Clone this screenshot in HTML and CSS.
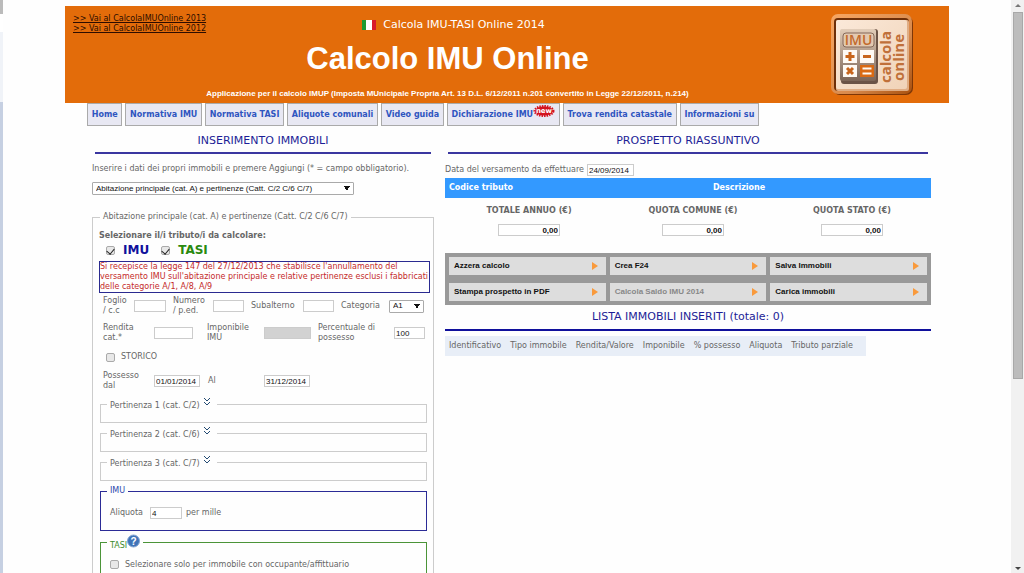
FILE: index.html
```html
<!DOCTYPE html>
<html lang="it">
<head>
<meta charset="utf-8">
<title>Calcolo IMU Online</title>
<link rel="stylesheet" href="styles.css">
</head>
<body>
<div class="window">
  <div class="edge"><div class="edge-top"></div><div class="edge-gap"></div><div class="edge-light"></div><div class="edge-blue"></div></div>
  <main class="view">
    <div class="page">
      <header class="banner">
        <div class="years">
          <a href="#">&gt;&gt; Vai al CalcolaIMUOnline 2013</a>
          <a href="#">&gt;&gt; Vai al CalcolaIMUOnline 2012</a>
        </div>
        <div class="titles">
          <div class="tagline">
            <svg width="14" height="10" viewBox="0 0 14 10"><path fill="#1c9a32" d="M0 0h4v10H0z"/><path fill="#fff" d="M4 0h6v10H4z"/><path fill="#d8192c" d="M10 0h4v10h-4z"/></svg>
            <span>Calcola IMU-TASI Online 2014</span>
          </div>
          <h1>Calcolo IMU Online</h1>
          <p class="law">Applicazione per il calcolo IMUP (Imposta MUnicipale Propria Art. 13 D.L. 6/12/2011 n.201 convertito in Legge 22/12/2011, n.214)</p>
        </div>
        <svg class="logo" width="84" height="84" viewBox="0 0 84 84">
          <defs>
            <linearGradient id="rim" x1="0" y1="0" x2="1" y2="1"><stop offset="0" stop-color="#f7a662"/><stop offset=".6" stop-color="#d98a4c"/><stop offset="1" stop-color="#a9510f"/></linearGradient>
            <linearGradient id="plate" x1="0" y1="0" x2="1" y2="1"><stop offset="0" stop-color="#fbe9d9"/><stop offset="1" stop-color="#f0d3b8"/></linearGradient>
            <linearGradient id="calc" x1="0" y1="0" x2="0" y2="1"><stop offset="0" stop-color="#e2cdb9"/><stop offset="1" stop-color="#7c6557"/></linearGradient>
          </defs>
          <rect x="2" y="2" width="80" height="79" rx="7" fill="#7e3606"/>
          <rect x="0" y="0" width="81" height="80" rx="7" fill="url(#rim)"/>
          <rect x="3" y="4" width="75" height="73" rx="4" fill="#6e2f08"/>
          <rect x="5" y="6" width="73" height="71" rx="2" fill="#e0ad84"/>
          <rect x="5" y="6" width="71" height="69" rx="2" fill="url(#plate)"/>
          <rect x="10" y="15" width="37" height="55" rx="3" fill="#6b5346"/>
          <rect x="9" y="15" width="36" height="52" rx="2" fill="url(#calc)"/>
          <rect x="12" y="19" width="31" height="14" rx="3" fill="#e3c9b0" stroke="#84695a" stroke-width="1"/>
          <text x="27.500" y="31" class="logo-imu" text-anchor="middle">IMU</text>
          <path fill="#fffaf4" d="M12 36h14v13H12zM29 36h14v13H29zM12 51h14v12H12z"/>
          <path fill="#d96a14" d="M29 51h14v12H29z"/>
          <path stroke="#c8651c" stroke-width="3" d="M14.500 42.500h9M19 38v9M32 42.500h8M16 54l6 6M22 54l-6 6"/>
          <path fill="none" stroke="#fffaf4" stroke-width="2" d="M31.500 54.500h9M31.500 59.500h9"/>
          <g class="logo-word"><text transform="translate(60 69) rotate(-90)">calcola</text><text transform="translate(73 67) rotate(-90)">online</text></g>
        </svg>
      </header>

      <nav class="menu">
        <a href="#">Home</a><a href="#">Normativa IMU</a><a href="#">Normativa TASI</a><a href="#">Aliquote comunali</a><a href="#">Video guida</a>
        <a href="#" class="with-badge">Dichiarazione IMU<svg width="22" height="12" viewBox="0 0 22 12"><ellipse cx="11" cy="6" rx="9" ry="4.500" fill="#d3121f"/><ellipse cx="11" cy="6" rx="9.500" ry="5" fill="none" stroke="#d3121f" stroke-width="2" stroke-dasharray="1.500 1"/><text x="11" y="8" text-anchor="middle">new</text></svg></a>
        <a href="#">Trova rendita catastale</a><a href="#">Informazioni su</a>
      </nav>

      <div class="columns">
        <section class="entry">
          <h2>INSERIMENTO IMMOBILI</h2>
          <p class="intro">Inserire i dati dei propri immobili e premere Aggiungi (* = campo obbligatorio).</p>
          <select class="kind" aria-label="Tipo immobile"><option>Abitazione principale (cat. A) e pertinenze (Catt. C/2 C/6 C/7)</option></select>

          <fieldset class="property">
            <legend>Abitazione principale (cat. A) e pertinenze (Catt. C/2 C/6 C/7)</legend>
            <p class="pick">Selezionare il/i tributo/i da calcolare:</p>
            <div class="taxes">
              <label class="imu"><input type="checkbox" checked>IMU</label>
              <label class="tasi"><input type="checkbox" checked>TASI</label>
            </div>
            <p class="notice">Si recepisce la legge 147 del 27/12/2013 che stabilisce l'annullamento del<br>versamento IMU sull'abitazione principale e relative pertinenze esclusi i fabbricati<br>delle categorie A/1, A/8, A/9</p>
            <div class="row cadastre">
              <label for="foglio">Foglio<br>/ c.c</label><input type="text" id="foglio">
              <label for="numero">Numero<br>/ p.ed.</label><input type="text" id="numero">
              <label for="sub">Subalterno</label><input type="text" id="sub">
              <label for="cat">Categoria</label><select id="cat"><option>A1</option></select>
            </div>
            <div class="row income">
              <label for="rendita">Rendita<br>cat.*</label><input type="text" id="rendita">
              <label for="imponibile">Imponibile<br>IMU</label><input type="text" id="imponibile" disabled>
              <label for="perc">Percentuale di<br>possesso</label><input type="text" id="perc" value="100">
            </div>
            <label class="historic"><input type="checkbox">STORICO</label>
            <div class="row period">
              <label for="dal">Possesso<br>dal</label><input type="text" id="dal" value="01/01/2014">
              <label for="al">Al</label><input type="text" id="al" value="31/12/2014">
            </div>
            <fieldset class="annex"><legend>Pertinenza 1 (cat. C/2) <svg width="6" height="8" viewBox="0 0 6 8"><path d="M0 0l3 3 3-3M0 4l3 3 3-3"/></svg></legend></fieldset>
            <fieldset class="annex"><legend>Pertinenza 2 (cat. C/6) <svg width="6" height="8" viewBox="0 0 6 8"><path d="M0 0l3 3 3-3M0 4l3 3 3-3"/></svg></legend></fieldset>
            <fieldset class="annex"><legend>Pertinenza 3 (cat. C/7) <svg width="6" height="8" viewBox="0 0 6 8"><path d="M0 0l3 3 3-3M0 4l3 3 3-3"/></svg></legend></fieldset>
            <fieldset class="rate imu-box">
              <legend>IMU</legend>
              <label for="aliquota">Aliquota</label><input type="text" id="aliquota" value="4"><span>per mille</span>
            </fieldset>
            <fieldset class="rate tasi-box">
              <legend>TASI<svg width="13" height="14" viewBox="0 0 13 14"><circle cx="6.500" cy="7" r="6" fill="#3f74b8" stroke="#86a6d2"/><text x="6.500" y="11" text-anchor="middle">?</text></svg></legend>
              <label class="tenant"><input type="checkbox">Selezionare solo per immobile con occupante/affittuario</label>
            </fieldset>
          </fieldset>
        </section>

        <section class="summary">
          <h2>PROSPETTO RIASSUNTIVO</h2>
          <div class="payment"><label for="data">Data del versamento da effettuare</label><input type="text" id="data" value="24/09/2014"></div>
          <table class="codes"><thead><tr><th class="code">Codice tributo</th><th>Descrizione</th></tr></thead></table>
          <div class="totals">
            <label>TOTALE ANNUO (€)<input type="text" value="0,00"></label>
            <label>QUOTA COMUNE (€)<input type="text" value="0,00"></label>
            <label>QUOTA STATO (€)<input type="text" value="0,00"></label>
          </div>
          <div class="actions">
            <button type="button">Azzera calcolo</button>
            <button type="button">Crea F24</button>
            <button type="button">Salva Immobili</button>
            <button type="button">Stampa prospetto in PDF</button>
            <button type="button" disabled>Calcola Saldo IMU 2014</button>
            <button type="button">Carica immobili</button>
          </div>
          <h2 class="list-title">LISTA IMMOBILI INSERITI (totale: 0)</h2>
          <table class="list"><thead><tr><th>Identificativo</th><th>Tipo immobile</th><th>Rendita/Valore</th><th>Imponibile</th><th>% possesso</th><th>Aliquota</th><th>Tributo parziale</th></tr></thead></table>
        </section>
      </div>
    </div>
  </main>
  <div class="scroll">
    <svg width="12" height="12" viewBox="0 0 12 12"><path fill="#777" d="M3 7l3-3 3 3z"/></svg>
    <div class="thumb"></div>
    <svg class="down" width="12" height="10" viewBox="0 0 12 10"><path fill="#444" d="M3 4l3 3 3-3z"/></svg>
  </div>
</div>
</body>
</html>
```
FILE: styles.css
```css
* { box-sizing: border-box; }
body { margin: 0; font: 8px/10px "DejaVu Sans", Verdana, sans-serif; color: #666; background: #fefefe; }
h1, h2, p { margin: 0; font-weight: normal; }
fieldset { margin: 0; padding: 0; min-width: 0; border: 1px solid #ccc; }
table { border-collapse: collapse; }

.window { display: flex; height: 100vh; overflow: hidden; }
.view { flex: 1; min-width: 0; overflow: hidden; padding-top: 6px; }
.page { max-width: 884px; margin: 0 auto; }

/* Neighbouring window visible on the left */
.edge { width: 3px; display: flex; flex-direction: column; }
.edge-top { height: 14px; background: #bbb; }
.edge-gap { height: 18px; background: #fff; }
.edge-light { height: 70px; background: #f0f3f8; }
.edge-blue { flex: 1; background: #c6d0e2; }

.scroll { width: 13px; display: flex; flex-direction: column; align-items: center; background: #f1f1f1; }
.thumb { width: 10px; height: 64%; background: #bcbcbc; border: 1px solid #a8a8a8; }
.down { margin-top: auto; }

.banner { display: grid; grid-template-columns: 133px minmax(0, 1fr) 252px; background: #e36c0a; }
.years { padding: 8px; display: flex; flex-direction: column; white-space: nowrap; }
.years a { color: #2c0c00; }
.titles { display: flex; flex-direction: column; align-items: center; color: #fff; white-space: nowrap; padding-bottom: 4px; }
.tagline { display: flex; align-items: center; gap: 7px; padding: 12px 0 0 12px; font-size: 11px; line-height: 14px; }
h1 { font: bold 31px/36px "Liberation Sans", Arial, sans-serif; padding-top: 9px; }
.law { font: bold 8px/10px "Liberation Sans", Arial, sans-serif; padding-top: 12px; }
.logo { margin: 8px 34px 0 auto; }
.logo-imu { font: 600 14px "Open Sans", sans-serif; fill: #c26a2c; }
.logo-word { font: bold 15px "Open Sans", sans-serif; fill: #c0703a; }

.menu { display: flex; gap: 3px; margin: 0 190px 0 22px; }
.menu a { flex: 1 0 auto; display: flex; justify-content: center; align-items: center; height: 23px; padding: 0 2px; border: 1px solid #aaa; background: #e8e8f3; color: #2f55c0; font-weight: bold; text-decoration: none; white-space: nowrap; }
.with-badge svg { align-self: flex-start; margin-top: 1px; }
.with-badge text { font: bold 7px "DejaVu Sans", sans-serif; fill: #fff; }

.columns { display: grid; grid-template-columns: 342fr 486fr; gap: 11px; padding: 7px 18px 0 27px; }
h2 { margin: 0 3px; font-size: 11px; line-height: 16px; padding-bottom: 3px; text-align: center; color: #1d1d96; border-bottom: 2px solid #3a36a0; }

input[type="text"] { width: 100%; height: 12px; margin: 0; padding: 0 1px; border: 1px solid #ccc; background: #fff; color: #111; font: 8px/10px "Liberation Sans", Arial, sans-serif; }
input[type="text"]:disabled { background: #d2d2d2; }
select {
  appearance: none; height: 13px; margin: 0; padding: 0 3px; border: 1px solid #aaa; border-radius: 1px; color: #111;
  font: 8px/10px "Liberation Sans", Arial, sans-serif;
  background-color: #fff;
  background-image: linear-gradient(to top right, transparent 50%, #111 0), linear-gradient(to top left, transparent 50%, #111 0);
  background-size: 3px 5px;
  background-position: right 6px center, right 3px center;
  background-repeat: no-repeat;
}
input[type="checkbox"] { appearance: none; width: 9px; height: 9px; margin: 0; border: 1px solid #aaa; border-radius: 2px; background: #e8e8e8; display: flex; justify-content: center; align-items: flex-start; flex: none; }
input[type="checkbox"]:checked::before { content: ""; width: 4px; height: 6px; border: solid #222; border-width: 0 1px 1px 0; rotate: 40deg; }

.intro { padding: 10px 0 8px; white-space: nowrap; }
.kind { display: block; width: 262px; }
.property { margin-top: 17px; padding: 9px 6px 20px; }
.property > legend { margin-left: 1px; padding: 0 3px; }
.pick { font-weight: bold; }
.taxes { display: flex; gap: 12px; padding: 3px 7px 4px; font-size: 12px; line-height: 13px; font-weight: bold; }
.taxes label { display: flex; align-items: center; gap: 8px; }
.imu { color: #10109c; }
.tasi { color: #2a8a10; }
.notice { margin: 0 -3px 0 0; border: 1px solid #2a2a90; color: #c42a2a; white-space: nowrap; }
.row { display: grid; align-items: center; padding-left: 4px; }
.cadastre { grid-template-columns: 31px 32px 47px 31px 59px 31px 55px 35px; padding-top: 3px; }
.cadastre input + label { padding-left: 7px; }
.income { grid-template-columns: 51px 39px 71px 47px 83px 31px; padding-top: 7px; }
.income input + label { padding-left: 14px; }
.income input:disabled + label { padding-left: 7px; }
.historic { display: flex; align-items: center; gap: 6px; padding: 9px 7px; }
.period { grid-template-columns: 51px 46px 64px 46px; }
.period input + label { padding-left: 8px; }
.annex { height: 25px; margin: 4px 0 0 1px; }
.row + .annex { margin-top: 7px; }
.annex legend { margin-left: 6px; padding: 0 6px 0 3px; }
.annex svg { vertical-align: 2px; margin: 0 1px 0 2px; fill: none; stroke: #234a72; }
.rate { display: flex; align-items: center; gap: 4px; height: 45px; padding: 0 9px; margin: 3px 0 0 1px; }
.rate legend { margin-left: -3px; padding: 0 3px; }
.rate input[type="text"] { width: 32px; margin-left: 3px; }
.imu-box { margin-top: 5px; border-color: #2b2b96; }
.imu-box legend { color: #2b45ac; }
.tasi-box { border-color: #4b9438; }
.tasi-box legend { color: #3c8a2a; }
.tasi-box svg { vertical-align: 0; }
.tasi-box text { font: bold 10px "Liberation Sans", sans-serif; fill: #fff; }
.tenant { display: flex; align-items: center; gap: 6px; }

.payment { display: flex; align-items: center; padding-top: 10px; }
.payment input { width: 47px; margin-left: 3px; }
.codes { width: 100%; margin-top: 2px; background: #3399ff; color: #fff; }
.codes th { height: 20px; padding: 0 4px; }
.codes .code { width: 21%; text-align: left; white-space: nowrap; }
.totals { display: grid; grid-template-columns: 168fr 160fr 158fr; padding: 8px 0 17px; font-weight: bold; }
.totals label { display: flex; flex-direction: column; align-items: center; gap: 8px; }
.totals input[type="text"] { width: 62px; text-align: right; font-weight: bold; }
.actions { display: grid; grid-template-columns: repeat(3, 1fr); gap: 8px 4px; padding: 4px; background: #999; }
.actions button { display: flex; justify-content: space-between; align-items: center; height: 18px; padding: 0 8px 0 5px; border: 0; background: #ddd; color: #111; font: bold 8px/10px "Liberation Sans", Arial, sans-serif; }
.actions button:disabled { color: #888; }
.actions button::after { content: ""; border: solid transparent; border-width: 4px 0 4px 6px; border-left-color: #f99a3c; }
.list-title { margin: 4px 0 0; padding-bottom: 4px; border-color: #10109c; }
.list { margin-top: 5px; background: #e8eef7; }
.list th { height: 20px; padding: 0 5px 0 4px; font-weight: normal; text-align: left; white-space: nowrap; }
.list th:last-child { padding-right: 13px; }
```
